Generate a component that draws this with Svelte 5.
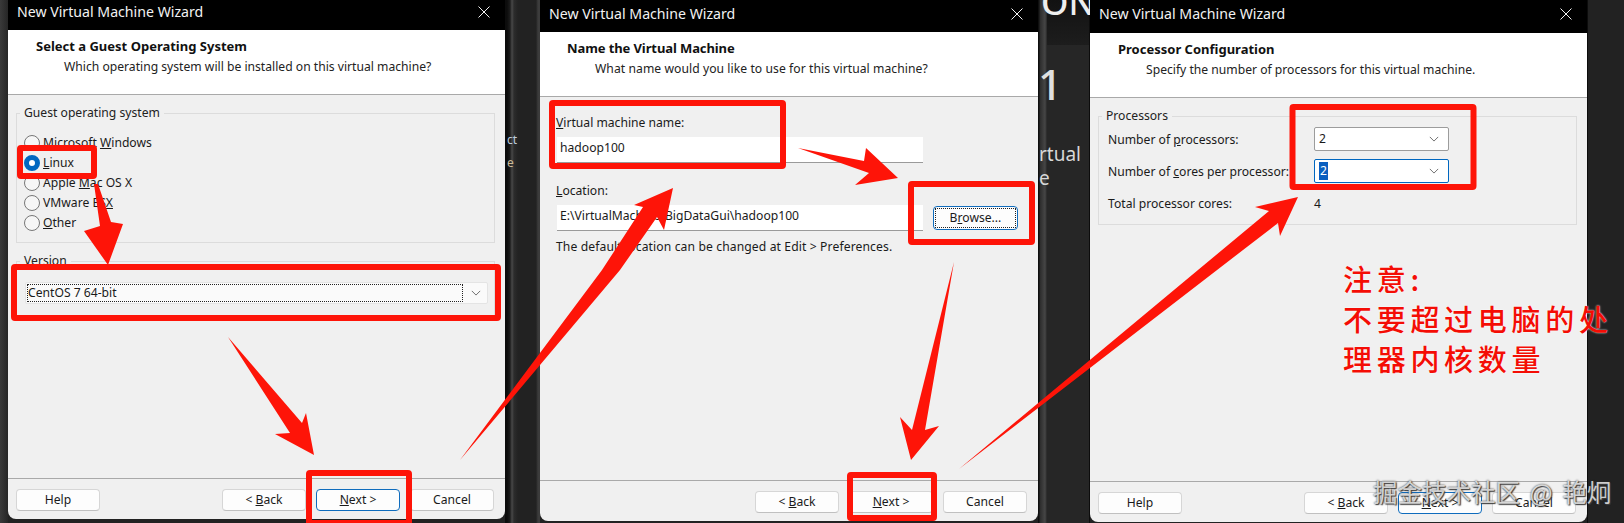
<script>
  const os = [
    { pre: 'Microsoft ', key: 'W', post: 'indows' },
    { pre: '', key: 'L', post: 'inux', checked: true },
    { pre: 'Apple ', key: 'M', post: 'ac OS X' },
    { pre: 'VMware ES', key: 'X', post: '' },
    { pre: '', key: 'O', post: 'ther' }
  ];
  const boxes = [
    [20, 148, 74, 28], [14, 267, 484, 51], [309, 473, 100, 50],
    [552, 103, 231, 63], [911, 184, 121, 58], [850, 475, 84, 43],
    [1292.5, 107, 181, 80]
  ];
  const arrows = [
    '94,184 100,226 84,231 108,265 123,224 111,222 98,184',
    '228,337 290,433 275,434 314,455 306,413 302,423',
    '460,460 602,270 643,207 634,205 673,188 664,230 657,217 620,270',
    '798,148 864,161 866,148 898,178 855,185 869,173',
    '954,262 912,430 900,417 911,460 939,426 925,430',
    '959,469 1198,270 1269,211 1255,207 1298,197 1280,236 1278,223 1243,250'
  ];
</script>

{#snippet shell(cls, heading, sub, body, foot)}
  <section class="win {cls}">
    <header class="bar">
      <span>New Virtual Machine Wizard</span>
      <svg class="close" viewBox="0 0 12 12"><path d="M0.5 0.5 11.5 11.5M11.5 0.5 0.5 11.5" /></svg>
    </header>
    <div class="head">
      <h1>{heading}</h1>
      <p>{sub}</p>
    </div>
    <div class="body">{@render body()}</div>
    <footer class="foot">{@render foot()}</footer>
  </section>
{/snippet}

{#snippet chev()}
  <svg class="chev" viewBox="0 0 12 7"><path d="M1 1 6 6 11 1" /></svg>
{/snippet}

{#snippet w1body()}
  <fieldset class="g1">
    <legend>Guest operating system</legend>
    {#each os as o}
      <div class="radio">
        <i class:on={o.checked}></i>
        <span>{o.pre}<u>{o.key}</u>{o.post}</span>
      </div>
    {/each}
  </fieldset>
  <fieldset class="g2">
    <legend>Version</legend>
    <div class="combo wide"><span class="dotted">CentOS 7 64-bit</span>{@render chev()}</div>
  </fieldset>
{/snippet}
{#snippet w1foot()}
  <button>Help</button><span class="sp"></span>
  <button>&lt; <u>B</u>ack</button>
  <button class="act"><u>N</u>ext &gt;</button>
  <button>Cancel</button>
{/snippet}

{#snippet w2body()}
  <div class="form">
    <div class="lbl"><u>V</u>irtual machine name:</div>
    <div class="input">hadoop100</div>
    <div class="lbl second"><u>L</u>ocation:</div>
    <div class="row">
      <div class="input">E:\VirtualMachine\BigDataGui\hadoop100</div>
      <button class="browse"><span>B<u>r</u>owse...</span></button>
    </div>
    <div class="lbl note">The default location can be changed at Edit &gt; Preferences.</div>
  </div>
{/snippet}
{#snippet w2foot()}
  <span class="sp"></span>
  <button>&lt; <u>B</u>ack</button>
  <button><u>N</u>ext &gt;</button>
  <button>Cancel</button>
{/snippet}

{#snippet w3body()}
  <fieldset class="g3">
    <legend>Processors</legend>
    <div class="grid">
      <span class="cap">Number of <u>p</u>rocessors:</span>
      <div class="combo"><span>2</span>{@render chev()}</div>
      <span class="cap">Number of <u>c</u>ores per processor:</span>
      <div class="combo focus"><span class="sel">2</span>{@render chev()}</div>
      <span class="cap">Total processor cores:</span>
      <span class="cap">4</span>
    </div>
  </fieldset>
{/snippet}

<main class="canvas">
  <div class="gut g0"></div>
  {@render shell('w1', 'Select a Guest Operating System', 'Which operating system will be installed on this virtual machine?', w1body, w1foot)}
  <div class="gut ga">
    <b class="frag f1">ct</b><b class="frag f2">e</b>
  </div>
  {@render shell('w2', 'Name the Virtual Machine', 'What name would you like to use for this virtual machine?', w2body, w2foot)}
  <div class="gut gb">
    <span class="on-txt">ON</span>
    <span class="one">1</span>
    <span class="rt r1">rtual</span>
    <span class="rt r2">e</span>
  </div>
  {@render shell('w3', 'Processor Configuration', 'Specify the number of processors for this virtual machine.', w3body, w1foot)}
  <div class="gut gc"></div>

  <svg class="marks" viewBox="0 0 1624 523">
    {#each arrows as a}<polygon points={a} />{/each}
    {#each boxes as b}<rect x={b[0]} y={b[1]} width={b[2]} height={b[3]} rx="1" />{/each}
  </svg>

  <div class="note-cn">
    <div>注意:</div>
    <div>不要超过电脑的处</div>
    <div>理器内核数量</div>
  </div>
  <div class="mark">掘金技术社区 @ 艳炯</div>
</main>

<style>
  :global(body) { margin: 0; background: #222; }
  .canvas {
    position: relative; width: 1624px; height: 523px; overflow: hidden;
    display: flex; align-items: flex-start; background: #222;
    font: 12.15px/18px "Noto Sans", "Open Sans", sans-serif; color: #1a1a1a;
  }
  .gut { position: relative; height: 523px; flex: none; overflow: hidden; color: #ddd; }
  .g0 { width: 8px; background: linear-gradient(90deg, #3a3a3a, #262626); }
  .ga { width: 35px; background: linear-gradient(90deg, #0c0c0c 0 2px, #1c1c1c 5px, #484848 7px, #2c2c2c 9px, #222 13px, #222 31px, #3c3c3c 33px, #3c3c3c 35px); }
  .gb { width: 52px; background: linear-gradient(90deg, #0e0e0e 0 1px, #2c2c2c 2px, #464646 7px, #262626 9px, #262626 51px, #0c0c0c 51px); }
  .gb::before { content: ""; position: absolute; left: 9px; right: 1px; top: 0; height: 45px; background: linear-gradient(#121212, #1d1d1d); }
  .gc { width: 37px; background: linear-gradient(90deg, #0c0c0c 0 1px, #222 1px); }

  .frag { position: absolute; left: 2px; font-weight: 400; font-size: 12px; color: #bcd; }
  .f1 { top: 131px; } .f2 { top: 154px; color: #cb9; }
  .on-txt { position: absolute; left: 3px; top: -18px; font-size: 35px; line-height: 40px; font-weight: 500; color: #eee; }
  .one { position: absolute; left: 0; top: 58px; font-size: 42px; line-height: 52px; font-weight: 500; color: #e0e0e0; }
  .rt { position: absolute; left: 1px; font-size: 19px; line-height: 24px; color: #d8d8d8; }
  .r1 { top: 142px; } .r2 { top: 166px; }

  .win {
    flex: none; display: flex; flex-direction: column;
    background: #f0f0f0; border-radius: 0 0 8px 8px; overflow: hidden;
  }
  .w1 { width: 497px; height: 519px; --bar: 30px; }
  .w2 { width: 498px; height: 521px; --bar: 32px; }
  .w3 { width: 497px; height: 522px; --bar: 33px; }

  .bar {
    flex: none; height: var(--bar); background: #000; color: #f2f2f2;
    display: flex; align-items: center; justify-content: space-between;
    padding: 0 15px 6px 9px; box-sizing: border-box; font-size: 14.15px; line-height: 18px;
  }
  .w2 .bar { padding: 0 15px 4px 9px; }
  .w3 .bar { padding: 0 15px 5px 9px; }
  .close { width: 12px; height: 12px; }
  .close path { stroke: #f2f2f2; stroke-width: 1; fill: none; }

  .head {
    flex: none; height: 64px; background: #fff;
    border-bottom: 1px solid #a9a9a9; padding-left: 28px;
  }
  .w2 .head { padding-left: 27px; }
  h1 { margin: 7px 0 3px; font-size: 13px; line-height: 18px; font-weight: 700; color: #111; }
  .w2 .head h1 { letter-spacing: -0.1px; }
  .w2 .head p { letter-spacing: 0.06px; }
  .head p { margin: 0 0 0 28px; line-height: 18px; color: #222; }

  .body { flex: 1; min-height: 0; }
  .foot {
    flex: none; height: 41px; box-sizing: border-box; border-top: 1px solid #a9a9a9;
    display: flex; gap: 10px; padding: 10px 11px 0 8px;
  }
  .sp { flex: 1; margin-right: -10px; }
  button {
    width: 84px; height: 22px; padding: 0; box-sizing: border-box; background: #fdfdfd;
    border: 1px solid #d6d6d6; border-bottom-color: #c0c0c0; border-radius: 4px;
    font: inherit; color: #1a1a1a; line-height: 18px;
  }
  .act { border-color: #0f6cbd; }

  fieldset { margin: 0 10px 0 8px; padding: 0; border: 1px solid #dcdcdc; min-width: 0; }
  legend { padding: 0 4px; line-height: 18px; color: #222; }
  .g1 { margin-top: 9px; padding: 11px 0 9px 7px; }
  .g1 legend { margin-left: -4px; }
  .g2 { margin-top: 9px; padding: 12px 6px 11px 8px; }
  .g2 legend { margin-left: -5px; }
  .g3 { margin-top: 9px; padding: 2px 0 9px 9px; }
  .g3 legend { margin-left: -6px; }

  .radio { display: flex; align-items: center; gap: 3px; height: 20px; }
  .radio i {
    width: 16px; height: 16px; box-sizing: border-box; border-radius: 50%;
    border: 1px solid #777; background: #f6f6f6; display: block;
  }
  .radio i.on { background: #fff; border: 5px solid #0067c0; }

  .combo {
    display: flex; align-items: center; justify-content: space-between;
    height: 24px; width: 135px; box-sizing: border-box; padding: 0 9px 0 4px;
    background: #fff; border: 1px solid #9c9c9c; border-radius: 2px;
  }
  .combo.wide { width: 463px; height: 22px; padding: 0 6px 0 1px; background: #fafafa; border-color: #e4e4e4; }
  .combo.focus { border-color: #0067c0; }
  .dotted { flex: none; width: 436px; height: 18px; box-sizing: border-box; outline: 1px dotted #222; outline-offset: -1px; padding-left: 1px; }
  .sel { background: #0a5fc0; color: #fff; padding: 0 1px; }
  .chev { width: 10px; height: 6px; }
  .chev path { fill: none; stroke: #555; stroke-width: 1; }

  .form { padding: 17px 0 0 16px; }
  .lbl { line-height: 18px; }
  .second { margin-top: 19px; }
  .note { margin-top: 7px; letter-spacing: 0.11px; }
  .input {
    box-sizing: border-box; width: 366px; height: 26px; margin: 5px 0 0 1px; padding: 0 3px;
    background: #fff; border-bottom: 1px solid #9a9a9a; line-height: 22px;
  }
  .row { display: flex; align-items: flex-start; gap: 10px; margin-top: 5px; }
  .row .input { margin-top: 0; }
  .browse {
    width: 85px; height: 24px; margin-top: 1px; border: 1px solid #0f6cbd;
    padding: 1px; display: flex;
  }
  .browse span { flex: 1; outline: 1px dotted #222; outline-offset: -1px; line-height: 20px; }

  .grid { display: grid; grid-template-columns: 206px 135px; grid-auto-rows: 24px; row-gap: 8px; align-items: center; }
  .cap { padding-top: 2px; line-height: 18px; white-space: nowrap; }

  .marks { position: absolute; inset: 0; width: 1624px; height: 523px; }
  .marks polygon { fill: #fe1408; }
  .marks rect { fill: none; stroke: #fe1408; stroke-width: 6; }

  .note-cn {
    position: absolute; left: 1343px; top: 258px; color: #f40d05;
    font: 500 29px/40px "Noto Sans CJK SC", sans-serif; letter-spacing: 4.7px; white-space: nowrap;
    text-shadow: 0 0 2px #fff;
  }
  .mark {
    position: absolute; left: 1373px; top: 476px; white-space: nowrap; word-spacing: 4px;
    font: 400 24.5px/32px "Noto Sans CJK SC", sans-serif; color: rgba(235,235,235,.85);
    text-shadow: 0 0 2px #333, 1px 1px 1px #444;
  }
</style>
